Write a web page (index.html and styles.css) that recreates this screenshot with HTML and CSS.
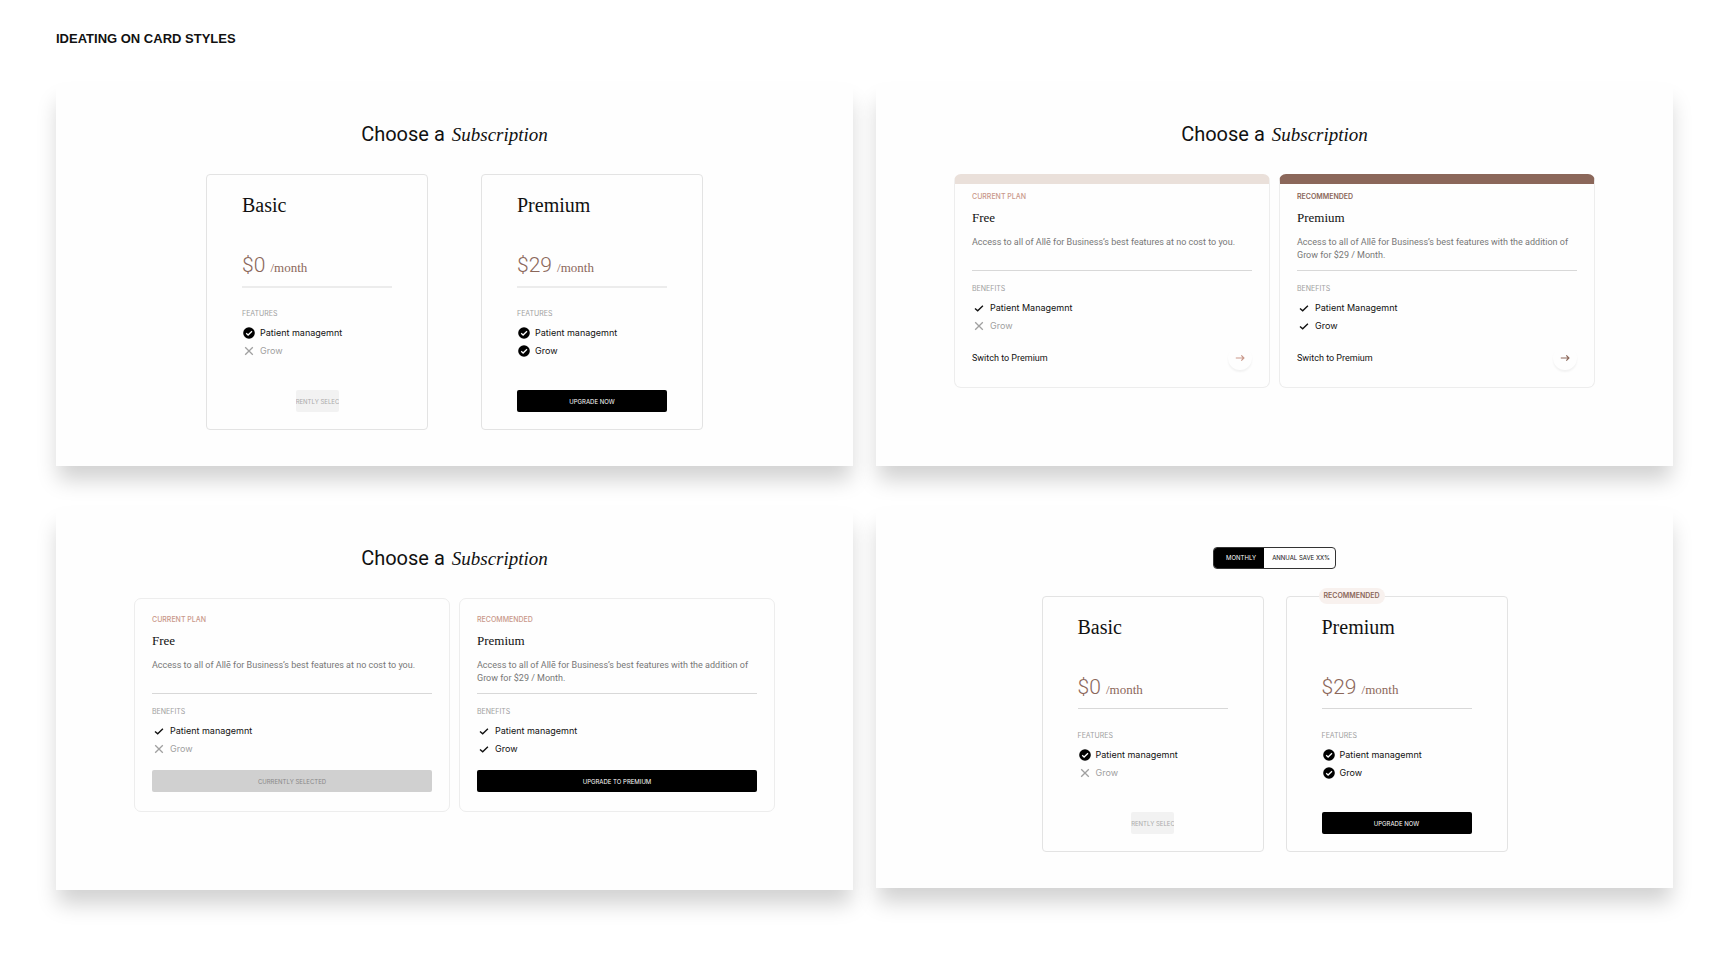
FILE: index.html
```
<!doctype html>
<html lang="en">
    <head>
        <meta charset="utf-8"/>
        <title>Card styles</title>
        <link rel="stylesheet" href="styles.css">
    </head>
    <body>
        <svg class="sprite" aria-hidden="true">
            <symbol id="check-circle" viewBox="0 0 14 14">
                <circle cx="7" cy="7" r="5.8" fill="#000"/>
                <path d="M4.2 7.3l1.9 1.7 3.9-3.8" fill="none" stroke="#fff" stroke-width="1.3"/>
            </symbol>
            <symbol id="check" viewBox="0 0 14 14">
                <path d="M3 7.4l2.7 2.4L10.9 4.8" fill="none" stroke="currentColor" stroke-width="1.4"/>
            </symbol>
            <symbol id="cross" viewBox="0 0 14 14">
                <path d="M3.2 3.2l7.6 7.6M10.8 3.2l-7.6 7.6" fill="none" stroke="currentColor" stroke-width="1.3"/>
            </symbol>
            <symbol id="arrow" viewBox="0 0 14 14">
                <path d="M2.8 7h8M8.3 4.4L10.9 7 8.3 9.6" fill="none" stroke="currentColor" stroke-width="1.2"/>
            </symbol>
        </svg>
        <main>
            <h1>IDEATING ON CARD STYLES</h1>
            <div class="board">
                <section class="panel">
                    <h2>Choose a <em>Subscription</em></h2>
                    <div class="cards wide">
                        <article class="plan">
                            <h3>Basic</h3>
                            <p class="price">$0 <span>/month</span></p>
                            <h4>FEATURES</h4>
                            <ul>
                                <li><svg><use href="#check-circle"/></svg>Patient managemnt</li>
                                <li class="off"><svg><use href="#cross"/></svg>Grow</li>
                            </ul>
                            <button class="btn selected" disabled>CURRENTLY SELECTED</button>
                        </article>
                        <article class="plan">
                            <h3>Premium</h3>
                            <p class="price">$29 <span>/month</span></p>
                            <h4>FEATURES</h4>
                            <ul>
                                <li><svg><use href="#check-circle"/></svg>Patient managemnt</li>
                                <li><svg><use href="#check-circle"/></svg>Grow</li>
                            </ul>
                            <button class="btn">UPGRADE NOW</button>
                        </article>
                    </div>
                </section>

                <section class="panel">
                    <h2>Choose a <em>Subscription</em></h2>
                    <div class="cards">
                        <article class="offer band">
                            <p class="tag">CURRENT PLAN</p>
                            <h3>Free</h3>
                            <p class="about">Access to all of Allē for Business’s best features at no cost to you.</p>
                            <h4>BENEFITS</h4>
                            <ul>
                                <li><svg><use href="#check"/></svg>Patient Managemnt</li>
                                <li class="off"><svg><use href="#cross"/></svg>Grow</li>
                            </ul>
                            <div class="switch">
                                <span id="switch-free">Switch to Premium</span>
                                <button class="go" aria-labelledby="switch-free"><svg><use href="#arrow"/></svg></button>
                            </div>
                        </article>
                        <article class="offer band brown">
                            <p class="tag">RECOMMENDED</p>
                            <h3>Premium</h3>
                            <p class="about">Access to all of Allē for Business’s best features with the addition of Grow for $29 / Month.</p>
                            <h4>BENEFITS</h4>
                            <ul>
                                <li><svg><use href="#check"/></svg>Patient Managemnt</li>
                                <li><svg><use href="#check"/></svg>Grow</li>
                            </ul>
                            <div class="switch">
                                <span id="switch-premium">Switch to Premium</span>
                                <button class="go" aria-labelledby="switch-premium"><svg><use href="#arrow"/></svg></button>
                            </div>
                        </article>
                    </div>
                </section>

                <section class="panel">
                    <h2>Choose a <em>Subscription</em></h2>
                    <div class="cards">
                        <article class="offer">
                            <p class="tag">CURRENT PLAN</p>
                            <h3>Free</h3>
                            <p class="about">Access to all of Allē for Business’s best features at no cost to you.</p>
                            <h4>BENEFITS</h4>
                            <ul>
                                <li><svg><use href="#check"/></svg>Patient managemnt</li>
                                <li class="off"><svg><use href="#cross"/></svg>Grow</li>
                            </ul>
                            <button class="btn" disabled>CURRENTLY SELECTED</button>
                        </article>
                        <article class="offer">
                            <p class="tag">RECOMMENDED</p>
                            <h3>Premium</h3>
                            <p class="about">Access to all of Allē for Business’s best features with the addition of Grow for $29 / Month.</p>
                            <h4>BENEFITS</h4>
                            <ul>
                                <li><svg><use href="#check"/></svg>Patient managemnt</li>
                                <li><svg><use href="#check"/></svg>Grow</li>
                            </ul>
                            <button class="btn">UPGRADE TO PREMIUM</button>
                        </article>
                    </div>
                </section>

                <section class="panel billing">
                    <div class="toggle">
                        <input type="radio" name="period" id="monthly" checked>
                        <label for="monthly">MONTHLY</label>
                        <input type="radio" name="period" id="annual">
                        <label for="annual">ANNUAL SAVE XX%</label>
                    </div>
                    <div class="cards narrow">
                        <article class="plan">
                            <h3>Basic</h3>
                            <p class="price">$0 <span>/month</span></p>
                            <h4>FEATURES</h4>
                            <ul>
                                <li><svg><use href="#check-circle"/></svg>Patient managemnt</li>
                                <li class="off"><svg><use href="#cross"/></svg>Grow</li>
                            </ul>
                            <button class="btn selected" disabled>CURRENTLY SELECTED</button>
                        </article>
                        <article class="plan">
                            <span class="badge">RECOMMENDED</span>
                            <h3>Premium</h3>
                            <p class="price">$29 <span>/month</span></p>
                            <h4>FEATURES</h4>
                            <ul>
                                <li><svg><use href="#check-circle"/></svg>Patient managemnt</li>
                                <li><svg><use href="#check-circle"/></svg>Grow</li>
                            </ul>
                            <button class="btn">UPGRADE NOW</button>
                        </article>
                    </div>
                </section>
            </div>
        </main>
    </body>
</html>
```
FILE: styles.css
```
:root {
	--ink: #111;
	--muted: #777;
	--faint: #a0a0a0;
	--line: #e3e3e3;
	--brown: #8b675a;
	--rose: #c9988a;
	--sand: #eae0da;
	--serif: "Liberation Serif", serif;
	--sans: Roboto, sans-serif;
}

* {
	box-sizing: border-box;
}

body {
	margin: 0;
	background: #fff;
	color: var(--ink);
	font-family: Inter, sans-serif;
	font-size: 9px;
}

h1, h2, h3, h4, p, ul {
	margin: 0;
	padding: 0;
	font-weight: 400;
}

ul {
	list-style: none;
}

.sprite {
	display: none;
}

main {
	padding: 29px 55px 62px 56px;
}

h1 {
	margin-bottom: 35px;
	font: bold 13px/20px "Liberation Sans", sans-serif;
}

.board {
	display: grid;
	grid-template-columns: 1fr 1fr;
	align-items: start;
	gap: 42px 23px;
}

.panel {
	min-height: 382px;
	padding: 36px 36px 35px;
	background: #fefefe;
	box-shadow: 0 16px 20px -2px rgba(0, 0, 0, .18);
}

.panel.billing {
	min-height: 380px;
	padding-top: 39px;
}

h2 {
	margin-bottom: 26px;
	font: 20px/28px var(--sans);
	text-align: center;
}

h2 em {
	margin-left: 2px;
	font: italic 19px/20px var(--serif);
}

.cards {
	display: flex;
	justify-content: center;
	gap: 9px;
}

.cards.wide {
	gap: 53px;
}

.cards.narrow {
	gap: 22px;
}

/* Price cards */
.plan {
	position: relative;
	flex: 0 1 222px;
	display: flex;
	flex-direction: column;
	padding: 18px 35px 17px;
	border: 1px solid var(--line);
	border-radius: 4px;
}

.plan h3 {
	font: 20px/24px var(--serif);
}

.price {
	height: 35px;
	margin-top: 36px;
	border-bottom: 2px solid #ececec;
	color: var(--brown);
	font: 300 21px/24px var(--sans);
}

.price span {
	font: 13px/13px var(--serif);
}

.narrow .price {
	height: 34px;
	margin-bottom: 1px;
	border-bottom: 1px solid #d8d8d8;
}

h4 {
	font-size: 7px;
	line-height: 10px;
	color: var(--faint);
}

.plan h4 {
	margin-top: 21px;
}

ul {
	margin-top: 5px;
}

li {
	display: flex;
	align-items: center;
	gap: 4px;
	line-height: 18px;
}

li svg, .go svg {
	width: 14px;
	height: 14px;
}

li.off {
	color: var(--faint);
}

.btn {
	display: flex;
	align-items: center;
	justify-content: center;
	width: 100%;
	height: 22px;
	margin-top: 12px;
	padding: 0;
	border: 0;
	border-radius: 2px;
	background: #000;
	color: #fff;
	font: 6px Inter, sans-serif;
	white-space: nowrap;
}

.btn:disabled {
	background: #d0d0d0;
	color: #888;
}

.plan .btn {
	margin-top: 30px;
}

.plan .btn.selected {
	align-self: center;
	width: 43px;
	overflow: hidden;
	background: #f2f2f2;
	color: #aaa;
}

.badge {
	position: absolute;
	top: -9px;
	left: 32px;
	padding: 0 5px;
	border-radius: 8px;
	background: #f8f1ee;
	color: var(--brown);
	font-size: 7px;
	font-weight: 600;
	line-height: 16px;
}

/* Offer cards */
.offer {
	flex: 0 1 316px;
	padding: 15px 17px 19px;
	border: 1px solid #ededed;
	border-radius: 7px;
}

.offer.band {
	padding-top: 7px;
	padding-bottom: 17px;
	border-top: 10px solid var(--sand);
}

.offer.brown {
	border-top-color: var(--brown);
}

.tag {
	color: var(--rose);
	font-size: 7px;
	font-weight: 500;
	line-height: 12px;
}

.brown .tag {
	color: var(--brown);
	font-weight: 600;
}

.offer h3 {
	margin: 6px 0 9px;
	font: 13px/18px var(--serif);
}

.about {
	min-height: 35px;
	padding-bottom: 8px;
	border-bottom: 1px solid #d8d8d8;
	color: var(--muted);
	font: 9px/13px var(--sans);
}

.offer h4 {
	margin-top: 13px;
}

.switch {
	display: flex;
	align-items: center;
	justify-content: space-between;
	margin-top: 11px;
	font-family: var(--sans);
}

.go {
	display: flex;
	align-items: center;
	justify-content: center;
	width: 24px;
	height: 24px;
	padding: 0;
	border: 0;
	border-radius: 50%;
	background: #fefefe;
	box-shadow: 0 2px 2px rgba(0, 0, 0, .05);
	color: var(--rose);
}

.brown .go {
	color: var(--brown);
}

/* Billing period */
.toggle {
	display: flex;
	width: fit-content;
	height: 22px;
	margin: 0 auto 27px;
	overflow: hidden;
	border: 1px solid #333;
	border-radius: 4px;
}

.toggle input {
	position: absolute;
	appearance: none;
	margin: 0;
}

.toggle label {
	padding: 0 5px 0 8px;
	font-size: 6px;
	line-height: 20px;
}

.toggle label:first-of-type {
	padding: 0 8px 0 12px;
}

.toggle input:checked + label {
	background: #000;
	color: #fff;
}
```
